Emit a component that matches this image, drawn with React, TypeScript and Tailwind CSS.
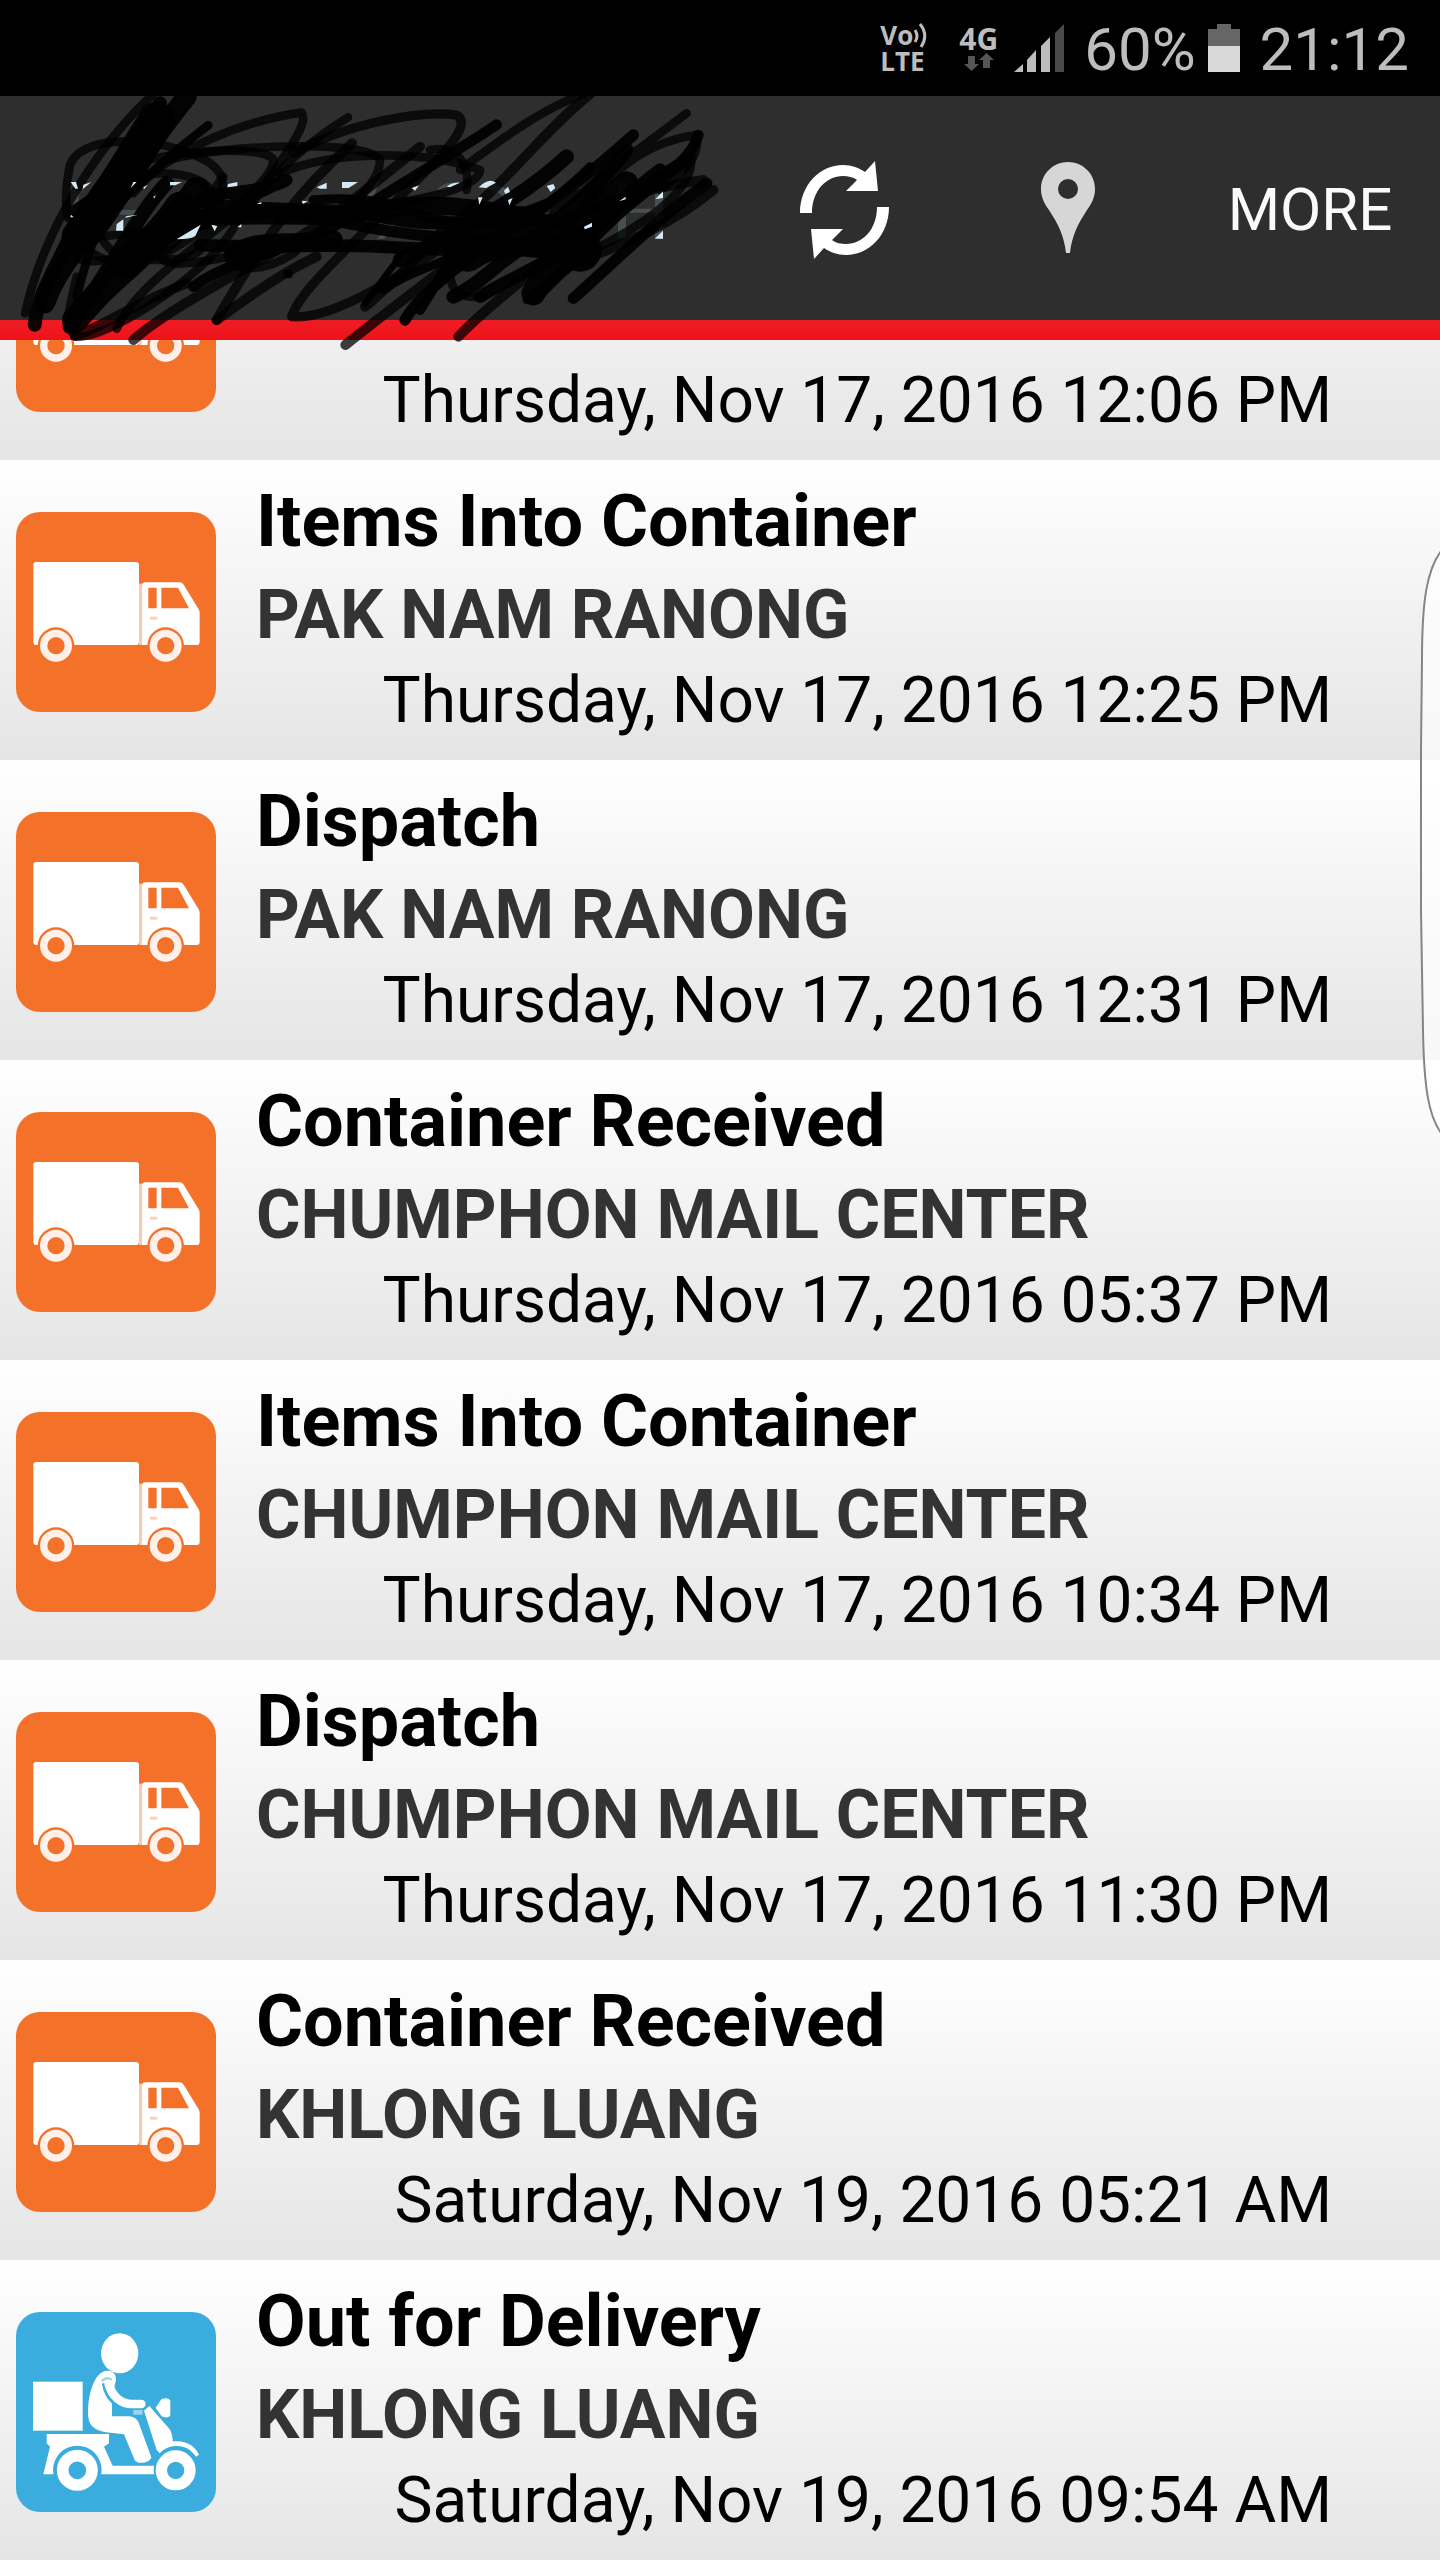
import React from 'react';

interface TrackingEvent {
  title?: string;
  location?: string;
  date: string;
  icon: 'truck' | 'scooter';
}

const events: TrackingEvent[] = [
  { date: 'Thursday, Nov 17, 2016 12:06 PM', icon: 'truck' },
  { title: 'Items Into Container', location: 'PAK NAM RANONG', date: 'Thursday, Nov 17, 2016 12:25 PM', icon: 'truck' },
  { title: 'Dispatch', location: 'PAK NAM RANONG', date: 'Thursday, Nov 17, 2016 12:31 PM', icon: 'truck' },
  { title: 'Container Received', location: 'CHUMPHON MAIL CENTER', date: 'Thursday, Nov 17, 2016 05:37 PM', icon: 'truck' },
  { title: 'Items Into Container', location: 'CHUMPHON MAIL CENTER', date: 'Thursday, Nov 17, 2016 10:34 PM', icon: 'truck' },
  { title: 'Dispatch', location: 'CHUMPHON MAIL CENTER', date: 'Thursday, Nov 17, 2016 11:30 PM', icon: 'truck' },
  { title: 'Container Received', location: 'KHLONG LUANG', date: 'Saturday, Nov 19, 2016 05:21 AM', icon: 'truck' },
  { title: 'Out for Delivery', location: 'KHLONG LUANG', date: 'Saturday, Nov 19, 2016 09:54 AM', icon: 'scooter' }
];

const TruckIcon = () => (
  <svg viewBox="0 0 600 600" className="w-full h-full" aria-hidden="true">
    <rect width="600" height="600" fill="#f4712a" />
    <rect x="52" y="150" width="317" height="249" rx="10" fill="#fff" />
    <rect x="369" y="215" width="9" height="184" fill="#fbc9ae" />
    <path
      fill="#fff"
      fillRule="evenodd"
      d="M378 220Q378 211 388 211H490Q499 211 503 218L548 292Q551 297 551 304V389Q551 399 541 399H378ZM397 227V289H422V227ZM436 227V289H519L486 227Z"
    />
    <rect x="402" y="314" width="22" height="9" fill="#fbd3bd" />
    <circle cx="120" cy="401" r="55" fill="#f4712a" />
    <circle cx="449" cy="401" r="55" fill="#f4712a" />
    <circle cx="120" cy="401" r="37" fill="none" stroke="#fff1ea" strokeWidth="22" />
    <circle cx="449" cy="401" r="37" fill="none" stroke="#fff1ea" strokeWidth="22" />
  </svg>
);

const ScooterIcon = () => (
  <svg viewBox="48 36 600 600" className="w-full h-full" aria-hidden="true">
    <rect x="48" y="36" width="600" height="600" fill="#3aacdd" />
    <g fill="#fff">
      <ellipse cx="359" cy="160" rx="56" ry="60" />
      <rect x="99" y="245" width="149" height="147" />
      <path d="M320 212C286 214 264 275 264 340C264 374 280 390 318 397L372 403L404 480C410 493 448 492 454 472L416 368C410 354 398 349 380 349H336V290L348 240C349 222 338 211 320 212Z" />
      <path d="M140 402H327V430L312 440L338 497H462V523H130L150 440L140 430Z" />
      <path d="M432 332L448 318L508 386Q518 400 518 424C560 420 585 438 597 464L588 470C572 446 550 436 527 438C503 440 490 448 479 460L470 450Z" />
      <path d="M467 323L484 298C494 292 511 295 511 304V345C508 354 494 354 484 348Z" />
    </g>
    <path d="M306 244Q318 228 336 240" fill="none" stroke="#9bd5ee" strokeWidth="7" />
    <path d="M310 250C318 300 352 326 400 331H430" fill="none" stroke="#3aacdd" strokeWidth="9" />
    <path d="M326 252C336 288 362 312 396 312H424" fill="none" stroke="#fff" strokeWidth="26" strokeLinecap="round" />
    <path d="M400 337H428" stroke="#9bd5ee" strokeWidth="14" />
    <circle cx="232" cy="510" r="73" fill="#3aacdd" />
    <circle cx="527" cy="510" r="66" fill="#3aacdd" />
    <circle cx="232" cy="511" r="44" fill="none" stroke="#fff" strokeWidth="35" />
    <circle cx="527" cy="511" r="43" fill="none" stroke="#fff" strokeWidth="34" />
  </svg>
);

const RefreshIcon = () => (
  <svg viewBox="0 0 89 98" className="w-[89px] h-[98px] mt-1" fill="#fff" aria-hidden="true">
    <path d="M0 52C0 24 20 4 43 4C52 4 59 7 65 11L75 0L78 30L46 30L57 19C53 16 48 15 43 15C26 15 12 30 12 52Z" />
    <path d="M89 46C89 74 69 94 46 94C37 94 30 91 24 87L14 98L11 68L43 68L32 79C36 82 41 83 46 83C63 83 77 68 77 46Z" />
  </svg>
);

const PinIcon = () => (
  <svg viewBox="0 0 54 92" className="w-[54px] h-[92px]" aria-hidden="true">
    <path
      fill="#d6d6d6"
      fillRule="evenodd"
      d="M27 0C42 0 54 12 54 27C54 35 51 41 46 48C37 62 31 73 29 91H25C23 73 17 62 8 48C3 41 0 35 0 27C0 12 12 0 27 0ZM27 17A10 10 0 1 0 27 37A10 10 0 1 0 27 17Z"
    />
  </svg>
);

// Marker strokes that hide the title in the action bar
const Scribble = () => (
  <svg viewBox="0 18 2220 792" className="absolute left-0 top-0 w-[740px] h-[264px] pointer-events-none" aria-hidden="true">
    <g fill="#58666d" opacity="0.6">
      <path d="M212 300h24v140h-24zM350 360h80v14h-80zM1108 276h30l-26 70h-16zM1460 282q70 0 80 50l-20 14q-10-44-60-48zM1854 276h24v170h-24zM1965 300h24v146h-24zM1878 356h88v12h-88zM1168 400h24l-40 46h-20zM1310 300q20-22 50-24l-16 24zM1730 290l40-12 6 14-30 14z" />
    </g>
    <g fill="none" stroke="#000" strokeLinecap="round" strokeLinejoin="round">
      <g strokeWidth="26" strokeOpacity="0.75">
        <path d="M460 12C330 130 140 380 75 670" />
        <path d="M205 385C190 330 205 250 210 225C240 140 430 140 540 180C640 210 690 250 660 330" />
        <path d="M215 380C240 510 340 530 430 510C560 480 640 290 670 260" />
        <path d="M400 310C500 180 740 90 905 68C930 100 850 200 790 290C680 420 420 560 350 716" />
        <path d="M1044 82C900 170 780 290 690 430S300 760 225 738C190 700 210 650 230 560" />
        <path d="M1056 160C900 300 800 430 650 690" strokeWidth="30" />
        <path d="M400 750C500 660 700 560 850 470S1100 300 1260 170" strokeWidth="30" />
        <path d="M650 690C760 610 860 540 950 500" strokeWidth="30" />
        <path d="M880 190C1040 100 1260 60 1370 75C1430 110 1280 240 1190 330C1050 470 900 600 875 680C980 690 1150 590 1300 490" strokeWidth="28" />
        <path d="M410 220C560 170 830 170 820 215C810 290 600 430 480 500C500 550 700 500 880 450" />
        <path d="M500 210C700 160 1110 150 1140 210C1140 300 1000 380 880 490C790 550 700 540 700 510" />
        <path d="M840 250C1000 180 1280 180 1440 240C1440 290 1280 330 1100 350" />
        <path d="M1380 240C1500 150 1620 60 1750 12" />
        <path d="M1770 12C1620 130 1480 330 1320 430C1200 560 1110 640 1095 650" strokeWidth="30" />
        <path d="M1290 180C1390 160 1410 250 1400 300" />
        <path d="M1660 370L2060 70M1660 470C1800 280 1900 160 2090 135C2100 200 2060 240 1980 300" />
        <path d="M2074 200C2080 290 1980 380 1780 480L1580 630" />
        <path d="M1580 450C1750 350 1950 290 2110 270M1720 520C1880 460 2020 400 2140 300" strokeWidth="30" />
        <path d="M250 430C200 520 250 520 320 510S560 530 600 480M280 380C300 460 330 480 370 510" />
        <path d="M300 300C430 220 640 240 640 330S480 420 300 440" />
        <path d="M1350 490V540C1350 610 1380 625 1450 620" />
      </g>
      <g strokeWidth="36" strokeOpacity="0.92">
        <path d="M480 40C390 180 250 350 210 440S110 620 104 704" strokeWidth="42" />
        <path d="M560 20C430 180 330 350 250 450S150 600 135 640" strokeWidth="60" />
        <path d="M470 90C390 220 320 340 240 440" strokeWidth="110" />
        <path d="M500 280C420 360 350 510 210 710" strokeWidth="44" />
        <path d="M590 300C520 400 420 500 350 560S270 640 225 690" strokeWidth="78" />
        <path d="M540 350C480 440 420 480 380 520" strokeWidth="90" />
        <path d="M625 106C540 170 400 290 340 360S270 470 230 620" strokeWidth="26" />
        <path d="M210 370C270 330 300 300 400 290" strokeWidth="32" />
        <path d="M1490 104C1380 180 1200 280 1050 380S700 500 580 590" strokeWidth="32" />
        <path d="M520 420C700 350 850 270 860 270C800 310 650 300 600 330C650 370 980 340 1140 380S1500 390 1650 390" strokeWidth="36" />
        <path d="M440 470C550 430 680 350 860 370S1080 420 1300 440S1600 470 1700 450" strokeWidth="34" />
        <path d="M560 390C760 360 950 395 1140 360S1480 370 1600 380" strokeWidth="54" />
        <path d="M600 465C750 475 940 460 1140 470S1500 490 1700 470" strokeWidth="38" />
        <path d="M940 330C1060 320 1150 330 1250 370S1500 400 1640 340" strokeWidth="28" />
        <path d="M700 500C760 440 850 470 1000 450" strokeWidth="58" />
        <path d="M1400 480C1500 410 1660 430 1740 480" strokeWidth="130" />
        <path d="M1700 200C1560 330 1350 440 1200 510" strokeWidth="44" />
        <path d="M1900 135C1760 260 1640 350 1560 400S1260 600 1215 690" strokeWidth="34" />
        <path d="M1880 180C1760 330 1640 420 1500 520C1430 580 1400 600 1360 620" strokeWidth="42" />
        <path d="M1770 230C1660 340 1560 400 1420 470S1220 550 1150 600" strokeWidth="26" />
        <path d="M2060 210C1940 280 1820 390 1740 450S1520 570 1440 620" strokeWidth="38" />
        <path d="M1880 280C1760 380 1700 450 1600 610" strokeWidth="72" />
        <path d="M2120 280C1980 380 1860 500 1720 625" strokeWidth="34" />
        <path d="M2095 135C2070 220 1960 280 1860 370S1700 540 1600 630" strokeWidth="32" />
        <path d="M1980 240C1900 300 1860 340 1780 410" strokeWidth="40" />
        <path d="M1400 430C1340 520 1300 600 1260 660" strokeWidth="30" />
        <path d="M1200 500L1095 640" strokeWidth="20" />
      </g>
      <g strokeWidth="30" strokeOpacity="0.75">
        <path d="M1036 765C1180 650 1300 560 1420 470" />
        <path d="M1375 740C1460 650 1560 580 1700 460" />
        <path d="M225 738C330 700 400 640 560 580" />
      </g>
      <path d="M863 552h3" strokeWidth="26" />
    </g>
    {/* slivers left bare between the strokes */}
    <g fill="#d3e9f4">
      <path d="M212 276h16l6 20h-8zM250 284l24-8-26 22zM400 276h10l-18 18zM430 292l14-8-12 14zM510 276h36l-20 10h-16zM684 282l28-6v12l-30 4zM950 292l30-14v18h-20zM1026 276h48l-28 18h-20zM350 402l20-14v34h-22zM380 378l34-4-40 10zM532 446l70-42-16 34q-14 10-54 10zM634 404l18 4-8 16zM213 374l8 8h-10zM905 332l18 2-14 8z" />
      <path d="M1235 294l22-8-12 16zM1340 290q18-14 40-12l-30 14zM1436 292q30-30 52-14l-30 16zM1434 322h14l-10 22zM1512 302l12-12 6 16-14 6zM1524 330l14-6-10 22zM1640 288l20-6 6 12-14 12zM1752 410l24-12v12l-22 8zM1964 446l25-24v24zM1966 328l23-24v20zM1857 334l20-14v8zM460 320l8-4-6 10zM770 342l14-6v6zM712 412l12-10v10z" />
    </g>
  </svg>
);

const StatusBar = () => (
  <div className="h-24 shrink-0 bg-black text-[#bdbdbd] flex items-center justify-end pr-[31px]">
    <div className="flex flex-col mr-8 font-['Open_Sans',sans-serif] font-bold text-[26px]">
      <span className="flex items-center h-[26px] leading-[26px]">
        Vo
        <svg viewBox="0 0 14 26" className="w-[14px] h-[26px]" fill="none" stroke="#bdbdbd" strokeWidth="3" aria-hidden="true">
          <path d="M2 8Q6 14 2 20M7 2Q16 13 8 25" />
        </svg>
      </span>
      <span className="leading-[26px]">LTE</span>
    </div>
    <div className="flex flex-col items-center mr-4 font-['Open_Sans',sans-serif] font-bold text-[30px] leading-7">
      <span>4G</span>
      <svg viewBox="0 0 30 18" className="w-[30px] h-[18px]" fill="#555" aria-hidden="true">
        <path d="M4 3h7v8h4l-7.500 7L0 11h4zM19 15h7V7h4L22.500 0L15 7h4z" />
      </svg>
    </div>
    <svg viewBox="0 0 50 48" className="w-[50px] h-12 mr-5" fill="#bdbdbd" aria-hidden="true">
      <path d="M0 48L9 40V48zM13 36L22 26V48H13zM27 22L36 13V48H27z" />
      <path d="M41 9L50 0V48H41z" fill="#4a4a4a" />
    </svg>
    <span className="text-[60px] leading-none pt-1 mr-3">60%</span>
    <svg viewBox="0 0 32 48" className="w-8 h-12 mr-5" aria-hidden="true">
      <path d="M9 0H23V5H32V22H0V5H9z" fill="#666" />
      <path d="M0 22H32V48H0z" fill="#d9d9d9" />
    </svg>
    <span className="text-[60px] leading-none pt-1">21:12</span>
  </div>
);

const EventRow = ({ title, location, date, icon }: TrackingEvent) => (
  <li className="h-[300px] shrink-0 flex items-start gap-10 pl-4 pr-[108px] bg-gradient-to-b from-white to-[#e5e5e5]">
    <div className="w-[200px] h-[200px] mt-[52px] shrink-0 rounded-3xl overflow-hidden">
      {icon === 'truck' ? <TruckIcon /> : <ScooterIcon />}
    </div>
    <div className="flex-1 pt-4">
      <h2 className="h-[90px] text-[72px] leading-[92px] font-bold text-black">{title}</h2>
      <p className="h-[98px] text-[68px] leading-[98px] font-bold text-[#333]">{location}</p>
      <p className="text-[64px] leading-[74px] text-black text-right">{date}</p>
    </div>
  </li>
);

const App = () => {
  return (
    <div className="relative h-screen flex flex-col overflow-hidden bg-white font-[Roboto,sans-serif]">
      <StatusBar />

      <header className="relative z-10 shrink-0">
        <div className="h-56 bg-[#2e2e2e] flex items-stretch justify-end text-[#fafafa]">
          <button type="button" aria-label="Refresh" className="w-56 flex items-center justify-center">
            <RefreshIcon />
          </button>
          <button type="button" aria-label="Map" className="w-56 flex items-center justify-center">
            <PinIcon />
          </button>
          <button type="button" className="w-[260px] pt-1 text-[60px]">MORE</button>
        </div>
        <div className="h-5 bg-gradient-to-b from-[#ee1c25] to-[#f01218]" />
        <Scribble />
      </header>

      <ul className="flex-1 min-h-0 flex flex-col justify-end overflow-hidden">
        {events.map((event, index) => (
          <EventRow key={index} {...event} />
        ))}
      </ul>

      {/* Edge panel handle */}
      <svg viewBox="0 0 20 584" className="absolute right-0 top-[550px] w-5 h-[584px]" aria-hidden="true">
        <path
          d="M21 1C7 20 2 50 2 110L1 200V360L3 480C4 540 9 566 21 583"
          fill="#fff"
          fillOpacity="0.7"
          stroke="#858585"
          strokeWidth="2"
        />
      </svg>
    </div>
  );
};

export default App;
